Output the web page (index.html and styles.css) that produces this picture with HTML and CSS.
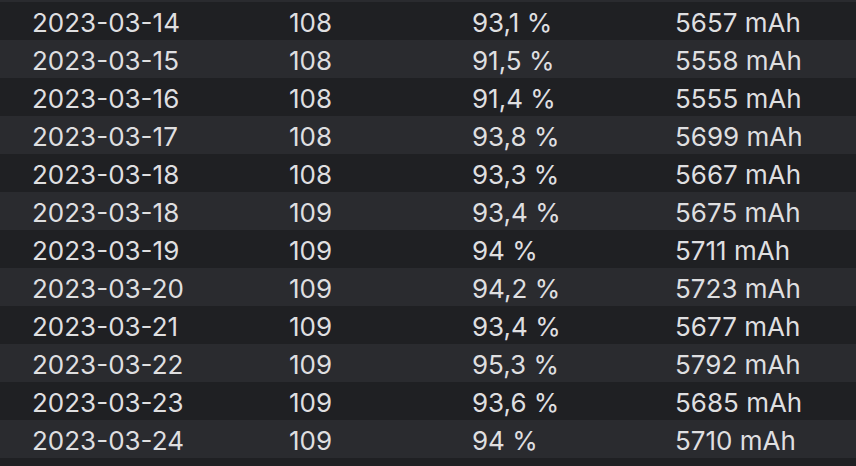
FILE: index.html
```html
<!DOCTYPE html>
<html>
<head>
<meta charset="utf-8">
<link rel="stylesheet" href="styles.css">
</head>
<body>
<div class="table">
  <div class="row peek"></div>
  <div class="row"><span>2023-03-14</span><span>108</span><span>93,1 %</span><span>5657 mAh</span></div>
  <div class="row"><span>2023-03-15</span><span>108</span><span>91,5 %</span><span>5558 mAh</span></div>
  <div class="row"><span>2023-03-16</span><span>108</span><span>91,4 %</span><span>5555 mAh</span></div>
  <div class="row"><span>2023-03-17</span><span>108</span><span>93,8 %</span><span>5699 mAh</span></div>
  <div class="row"><span>2023-03-18</span><span>108</span><span>93,3 %</span><span>5667 mAh</span></div>
  <div class="row"><span>2023-03-18</span><span>109</span><span>93,4 %</span><span>5675 mAh</span></div>
  <div class="row"><span>2023-03-19</span><span>109</span><span>94 %</span><span>5711 mAh</span></div>
  <div class="row"><span>2023-03-20</span><span>109</span><span>94,2 %</span><span>5723 mAh</span></div>
  <div class="row"><span>2023-03-21</span><span>109</span><span>93,4 %</span><span>5677 mAh</span></div>
  <div class="row"><span>2023-03-22</span><span>109</span><span>95,3 %</span><span>5792 mAh</span></div>
  <div class="row"><span>2023-03-23</span><span>109</span><span>93,6 %</span><span>5685 mAh</span></div>
  <div class="row"><span>2023-03-24</span><span>109</span><span>94 %</span><span>5710 mAh</span></div>
</div>
</body>
</html>
```
FILE: styles.css
```css
html, body {
  margin: 0;
  padding: 0;
  background: #1f2023;
  height: 100%;
  overflow: hidden;
}
.table {
  display: flex;
  flex-direction: column;
  font-family: Inter, "Noto Sans", sans-serif;
  font-size: 26px;
  color: #dfdfe0;
}
.row {
  display: grid;
  grid-template-columns: 257px 183px 203px 1fr;
  height: 38px;
  align-items: center;
  padding-left: 32px;
  background: #1f2023;
  line-height: 1;
}
.row:nth-child(odd) {
  background: #2a2b2f;
}
.row.peek {
  height: 2px;
}
.row span {
  white-space: nowrap;
  position: relative;
  top: 2px;
}
```
